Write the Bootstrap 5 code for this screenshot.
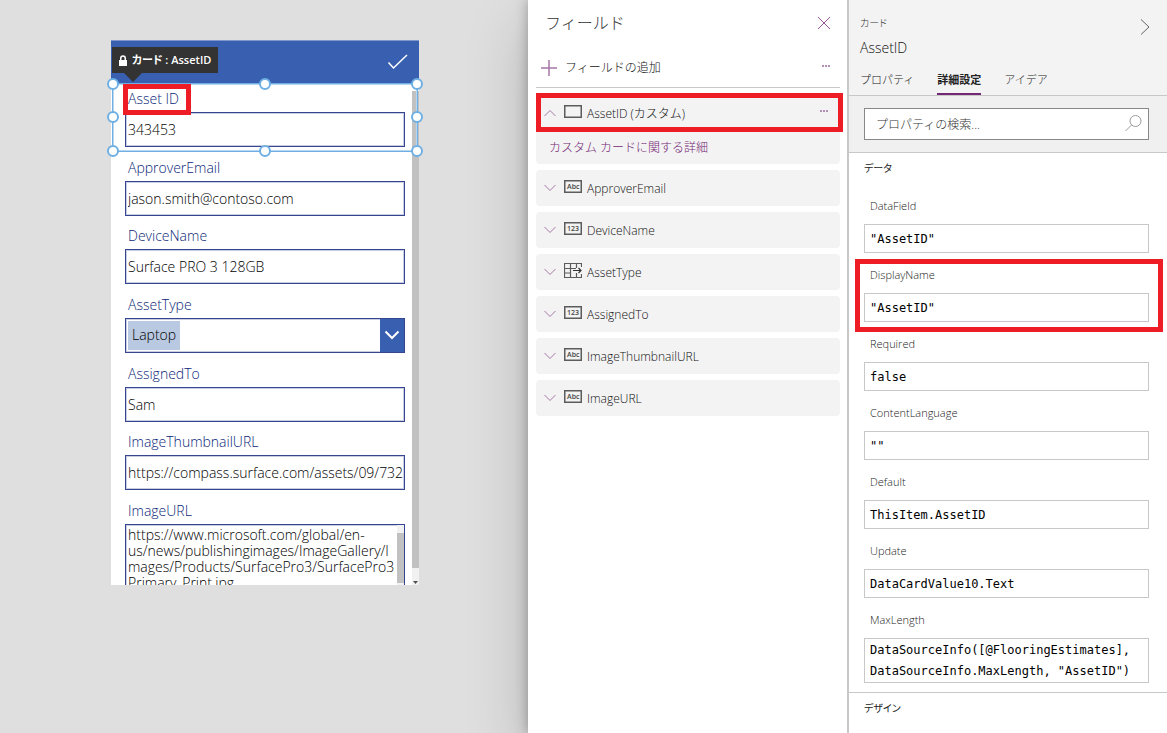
<!DOCTYPE html>
<html lang="ja">
<head>
<meta charset="utf-8">
<meta name="viewport" content="width=device-width, initial-scale=1">
<title>フィールド</title>
<link href="https://cdn.jsdelivr.net/npm/bootstrap@5.3.0/dist/css/bootstrap.min.css" rel="stylesheet">
<style>
:root { --plum: #742774; --navy: #0b1f78; --brand: #3960b0; --mark: #ee1c25; --handle: #6fafe3; }
body { font-family: "Open Sans", "Noto Sans CJK JP", sans-serif; font-size: 12px; line-height: 16px; color: #333; }
svg { display: block; flex: none; }
.callout-frame { position: absolute; border: 5px solid var(--mark); pointer-events: none; z-index: 5; }

/* canvas */
.studio { background: #dfdfdf; padding: 40px 0 40px 2px; }
.phone { width: 308px; height: 545px; }
.phone-bar { height: 43px; background: var(--brand); border-top: 1px solid #7f97ca; padding-right: 10px; }
.phone-form { height: 502px; display: grid; grid-template-rows: repeat(6, 1fr) 90px; padding: 0 14px; background: #fff; font-size: 14px; font-weight: 300; }
.field-card label { color: var(--navy); height: 29px; line-height: 18px; padding: 7px 3px 0; }
.field-box { height: 35px; padding: 0 0 0 2px; border: 1px solid #35458f; box-shadow: inset 0 0 0 1px #c9cde2; border-radius: 0; background: #fff; color: #000; font-size: 14px; font-weight: 300; line-height: 16px; }
textarea.field-box { height: 90px; padding: 2px 4px 0 2px; resize: none; overflow: hidden; word-break: break-all; }
select.field-box { appearance: none; padding-left: 6px; background: linear-gradient(#b9c9e1, #b9c9e1) 2px 2px / 52px 29px no-repeat #fff; }
.drop-mark { right: 1px; bottom: 1px; top: 1px; width: 24px; background: var(--brand); pointer-events: none; }
.selection { inset: 0 -13px; border: 1px solid var(--handle); box-shadow: inset 0 0 0 1px #b7d7f1; pointer-events: none; z-index: 4; }
.selection i { position: absolute; width: 12px; height: 12px; border: 2px solid var(--handle); border-radius: 50%; background: #fff; transform: translate(-50%, -50%); }
.frame-label { left: -2px; top: 1px; width: 68px; height: 31px; }
.scroll-rail { top: 51px; right: 0; bottom: 0; width: 7px; background: #f1f1f1; }
.scroll-rail div { height: 477px; background: #c1c1c1; }
.inner-rail { right: 1px; top: 30px; bottom: 0; width: 7px; background: #f1f1f1; padding-top: 8px; }
.inner-rail div { height: 50px; background: #c1c1c1; }
.tip { left: 1px; top: 7px; height: 26px; padding: 0 7px; gap: 5px; background: #333; color: #fff; font-size: 11px; font-weight: 600; z-index: 6; font-feature-settings: "palt"; }
.tip::after { content: ""; position: absolute; left: 12px; top: 26px; border: 9px solid transparent; border-top-color: #333; border-bottom: 0; }

/* fields pane */
.fields { flex: 0 0 319px; padding: 0 7px 0 8px; box-shadow: 0 0 12px rgba(0, 0, 0, .3), 0 24px 60px rgba(0, 0, 0, .2); background: #fff; z-index: 1; font-weight: 300; color: #111; }
.fields h2 { font-size: 16px; line-height: 24px; font-weight: 300; color: #333; }
.fields-head { height: 45px; padding: 0 10px 0 9px; }
.fields-add { height: 43px; padding: 4px 9px 0 5px; border-bottom: 1px solid #c8c8c8; }
.plain { border: 0; background: none; padding: 0; color: inherit; font-weight: inherit; }
.fields-list { gap: 6px; padding-top: 7px; }
.field-item { background: #f3f3f3; border-radius: 4px; }
.field-row { height: 36px; padding: 0 11px 0 8px; gap: 8px; }
.field-row span { margin-left: -3px; padding-top: 2px; }
.field-more { display: block; height: 33px; line-height: 34px; padding-left: 13px; color: var(--plum); text-decoration: none; }
.frame-item { inset: -2px -3px auto 0; height: 39px; }
.type-icon { margin-bottom: 4px; }
.type-icon text { font: 600 7px "Open Sans", sans-serif; fill: #444; }

/* property pane */
.props { flex: 0 0 320px; border-left: 2px solid #c8c8c8; background: #fff; font-weight: 300; z-index: 2; }
.props-head { height: 96px; padding: 15px 17px 0 11px; background: #f3f3f3; border-bottom: 1px solid #c8c8c8; }
.props-head h2 { font-size: 14px; line-height: 18px; font-weight: 300; margin: 8px 0 0; color: #111; }
.kana { font-size: 10px; font-feature-settings: "palt"; }
.prop-tabs { gap: 23px; padding-top: 15px; font-size: 11px; }
.prop-tabs a { color: #222; text-decoration: none; padding-bottom: 5px; border-bottom: 2px solid transparent; }
.prop-tabs a.current { font-weight: 700; border-color: var(--plum); }
.prop-search { height: 57px; padding: 12px 18px 0 15px; background: #f0f0f0; border-bottom: 1px solid #c8c8c8; }
.prop-search input { height: 32px; border: 1px solid #888; padding: 0 36px 0 11px; font-size: 12px; font-weight: 300; }
.prop-search input::placeholder { color: #333; opacity: 1; }
.prop-search svg { position: absolute; right: 7px; top: 7px; }
.prop-body { padding: 0 18px 9px 15px; }
.prop-body h3, .prop-next h3 { line-height: 30px; font-weight: 400; margin: 0; color: #222; }
.prop-body h3 { padding-bottom: 6px; }
.prop { margin-bottom: 5px; }
.prop label { height: 35px; line-height: 34px; padding-left: 6px; color: #222; font-size: 11px; }
.code-box { height: 29px; border: 1px solid #c8c8c8; padding: 0 5px; font: 12px/21px "DejaVu Sans Mono", "Liberation Mono", monospace; color: #000; }
textarea.code-box { height: 45px; resize: none; overflow: hidden; padding-top: 1px; }
.prop:last-child { margin: 0; }
.frame-prop { inset: 1px -14px -10px -9px; }
.prop-next { border-top: 1px solid #c8c8c8; padding: 0 15px; }
</style>
</head>
<body>
<svg width="0" height="0" class="position-absolute" aria-hidden="true">
  <defs>
    <symbol id="down" viewBox="0 0 12 8"><path d="M.5 1 6 6.5 11.5 1" fill="none" stroke="#a678a6"/></symbol>
    <symbol id="up" viewBox="0 0 12 8"><path d="M.5 7 6 1.500 11.500 7" fill="none" stroke="#a678a6"/></symbol>
    <symbol id="dots" viewBox="0 0 9 2"><path d="M0 0h2v2H0zM3 0h2v2H3zM6 0h2v2H6z" fill="#b58fb5"/></symbol>
    <symbol id="abc" viewBox="0 0 18 13"><rect x=".75" y=".75" width="16.500" height="11.500" fill="none" stroke="#5c5c5c" stroke-width="1.500"/></symbol>
  </defs>
</svg>

<div class="d-flex min-vh-100 overflow-hidden">
  <main class="studio flex-grow-1 d-flex justify-content-center align-items-start">
    <section class="phone position-relative">
      <header class="phone-bar d-flex align-items-center justify-content-end">
        <button class="plain" type="button" aria-label="保存"><svg width="22" height="16" viewBox="0 0 22 16"><path d="M1.500 8.500 6.500 14 20 1" fill="none" stroke="#fff" stroke-width="1.500"/></svg></button>
      </header>
      <form class="phone-form">
        <div class="field-card position-relative">
          <label class="d-block" for="f1">Asset ID</label>
          <input class="field-box w-100 d-block" id="f1" value="343453">
          <div class="selection position-absolute">
            <i style="left:0;top:0"></i><i style="left:50%;top:0"></i><i style="left:100%;top:0"></i>
            <i style="left:0;top:50%"></i><i style="left:100%;top:50%"></i>
            <i style="left:0;top:100%"></i><i style="left:50%;top:100%"></i><i style="left:100%;top:100%"></i>
          </div>
          <div class="callout-frame frame-label"></div>
        </div>
        <div class="field-card"><label class="d-block" for="f2">ApproverEmail</label><input class="field-box w-100 d-block" id="f2" value="jason.smith@contoso.com"></div>
        <div class="field-card"><label class="d-block" for="f3">DeviceName</label><input class="field-box w-100 d-block" id="f3" value="Surface PRO 3 128GB"></div>
        <div class="field-card">
          <label class="d-block" for="f4">AssetType</label>
          <div class="position-relative">
            <select class="field-box w-100 d-block" id="f4"><option>Laptop</option></select>
            <div class="drop-mark position-absolute d-flex align-items-center justify-content-center"><svg width="16" height="10" viewBox="0 0 16 10"><path d="M1.500 1.500 8 8 14.500 1.500" fill="none" stroke="#fff" stroke-width="2"/></svg></div>
          </div>
        </div>
        <div class="field-card"><label class="d-block" for="f5">AssignedTo</label><input class="field-box w-100 d-block" id="f5" value="Sam"></div>
        <div class="field-card"><label class="d-block" for="f6">ImageThumbnailURL</label><input class="field-box w-100 d-block" id="f6" value="https://compass.surface.com/assets/09/732"></div>
        <div class="field-card position-relative overflow-hidden">
          <label class="d-block" for="f7">ImageURL</label>
          <textarea class="field-box w-100 d-block" id="f7">https://www.microsoft.com/global/en-
us/news/publishingimages/ImageGallery/I
mages/Products/SurfacePro3/SurfacePro3
Primary_Print.jpg</textarea>
          <div class="inner-rail position-absolute"><div></div></div>
        </div>
      </form>
      <div class="scroll-rail position-absolute"><div></div><svg class="mx-auto mt-2" width="5" height="9" viewBox="0 0 5 9"><path d="M0 5h5L2.500 8z" fill="#505050"/></svg></div>
      <div class="tip position-absolute d-flex align-items-center text-nowrap">
        <svg width="8" height="11" viewBox="0 0 8 11"><path d="M0 5h8v6H0z" fill="#fff"/><path d="M1.750 5V3.250a2.250 2.250 0 0 1 4.500 0V5" fill="none" stroke="#fff" stroke-width="1.500"/></svg>カード : AssetID
      </div>
    </section>
  </main>

  <aside class="fields position-relative">
    <div class="fields-head d-flex align-items-center justify-content-between">
      <h2 class="m-0">フィールド</h2>
      <button class="plain" type="button" aria-label="閉じる"><svg width="12" height="12" viewBox="0 0 12 12"><path d="m0 0 12 12M12 0 0 12" stroke="#96559a" fill="none"/></svg></button>
    </div>
    <div class="fields-add d-flex align-items-center justify-content-between">
      <button class="plain d-flex align-items-center gap-2" type="button"><svg width="16" height="16" viewBox="0 0 16 16"><path d="M8 0v16M0 8h16" stroke="#a678a6" stroke-width="1.500"/></svg>フィールドの追加</button>
      <button class="plain pb-1" type="button" aria-label="その他"><svg width="9" height="2"><use href="#dots"/></svg></button>
    </div>
    <ul class="fields-list list-unstyled d-flex flex-column m-0">
      <li class="field-item position-relative">
        <div class="field-row d-flex align-items-center">
          <button class="plain d-flex align-items-center gap-2 flex-grow-1" type="button"><svg width="12" height="8"><use href="#up"/></svg><svg class="type-icon" width="18" height="13"><use href="#abc"/></svg><span>AssetID (カスタム)</span></button>
          <button class="plain pb-1" type="button" aria-label="その他"><svg width="9" height="2"><use href="#dots"/></svg></button>
        </div>
        <a class="field-more" href="#">カスタム カードに関する詳細</a>
        <div class="callout-frame frame-item"></div>
      </li>
      <li class="field-item"><button class="plain field-row d-flex align-items-center w-100" type="button"><svg width="12" height="8"><use href="#down"/></svg><svg class="type-icon" width="18" height="13"><use href="#abc"/><text x="3" y="9">Abc</text></svg><span>ApproverEmail</span></button></li>
      <li class="field-item"><button class="plain field-row d-flex align-items-center w-100" type="button"><svg width="12" height="8"><use href="#down"/></svg><svg class="type-icon" width="18" height="13"><use href="#abc"/><text x="3" y="9">123</text></svg><span>DeviceName</span></button></li>
      <li class="field-item"><button class="plain field-row d-flex align-items-center w-100" type="button"><svg width="12" height="8"><use href="#down"/></svg><svg class="type-icon" width="18" height="15" viewBox="0 0 18 15"><path d="M17.500 4V.5H.5v14h17V11M6.500.5v14M12.500.5V5M12.500 10v4.500M.5 5.500h6M.5 10h6M6.500 5.500H12" fill="none" stroke="#5c5c5c" stroke-width="1.200"/><path d="M9 7.500h8M14.500 5l2.500 2.500-2.500 2.500" fill="none" stroke="#333" stroke-width="1.200"/></svg><span>AssetType</span></button></li>
      <li class="field-item"><button class="plain field-row d-flex align-items-center w-100" type="button"><svg width="12" height="8"><use href="#down"/></svg><svg class="type-icon" width="18" height="13"><use href="#abc"/><text x="3" y="9">123</text></svg><span>AssignedTo</span></button></li>
      <li class="field-item"><button class="plain field-row d-flex align-items-center w-100" type="button"><svg width="12" height="8"><use href="#down"/></svg><svg class="type-icon" width="18" height="13"><use href="#abc"/><text x="3" y="9">Abc</text></svg><span>ImageThumbnailURL</span></button></li>
      <li class="field-item"><button class="plain field-row d-flex align-items-center w-100" type="button"><svg width="12" height="8"><use href="#down"/></svg><svg class="type-icon" width="18" height="13"><use href="#abc"/><text x="3" y="9">Abc</text></svg><span>ImageURL</span></button></li>
    </ul>
  </aside>

  <aside class="props position-relative">
    <div class="props-head">
      <div class="d-flex justify-content-between">
        <div><div class="kana">カード</div><h2>AssetID</h2></div>
        <button class="plain align-self-start pt-1" type="button" aria-label="折りたたむ"><svg width="10" height="16" viewBox="0 0 10 16"><path d="m1 .5 8 7.500-8 7.500" fill="none" stroke="#666"/></svg></button>
      </div>
      <nav class="prop-tabs d-flex"><a href="#">プロパティ</a><a class="current" href="#" aria-current="page">詳細設定</a><a href="#">アイデア</a></nav>
    </div>
    <div class="prop-search">
      <div class="position-relative">
        <input class="w-100 d-block" type="text" placeholder="プロパティの検索..." aria-label="プロパティの検索">
        <svg width="17" height="17" viewBox="0 0 17 17"><circle cx="10.500" cy="6" r="5.500" fill="none" stroke="#999"/><path d="M6.500 10 .5 16" stroke="#999"/></svg>
      </div>
    </div>
    <div class="prop-body">
      <h3 class="kana">データ</h3>
      <div class="prop"><label class="d-block" for="p1">DataField</label><input class="code-box w-100 d-block" id="p1" value="&quot;AssetID&quot;"></div>
      <div class="prop position-relative"><label class="d-block" for="p2">DisplayName</label><input class="code-box w-100 d-block" id="p2" value="&quot;AssetID&quot;"><div class="callout-frame frame-prop"></div></div>
      <div class="prop"><label class="d-block" for="p3">Required</label><input class="code-box w-100 d-block" id="p3" value="false"></div>
      <div class="prop"><label class="d-block" for="p4">ContentLanguage</label><input class="code-box w-100 d-block" id="p4" value="&quot;&quot;"></div>
      <div class="prop"><label class="d-block" for="p5">Default</label><input class="code-box w-100 d-block" id="p5" value="ThisItem.AssetID"></div>
      <div class="prop"><label class="d-block" for="p6">Update</label><input class="code-box w-100 d-block" id="p6" value="DataCardValue10.Text"></div>
      <div class="prop"><label class="d-block" for="p7">MaxLength</label><textarea class="code-box w-100 d-block" id="p7">DataSourceInfo([@FlooringEstimates],
DataSourceInfo.MaxLength, "AssetID")</textarea></div>
    </div>
    <div class="prop-next"><h3 class="kana">デザイン</h3></div>
  </aside>
</div>
<script src="https://cdn.jsdelivr.net/npm/bootstrap@5.3.0/dist/js/bootstrap.bundle.min.js"></script>
</body>
</html>
